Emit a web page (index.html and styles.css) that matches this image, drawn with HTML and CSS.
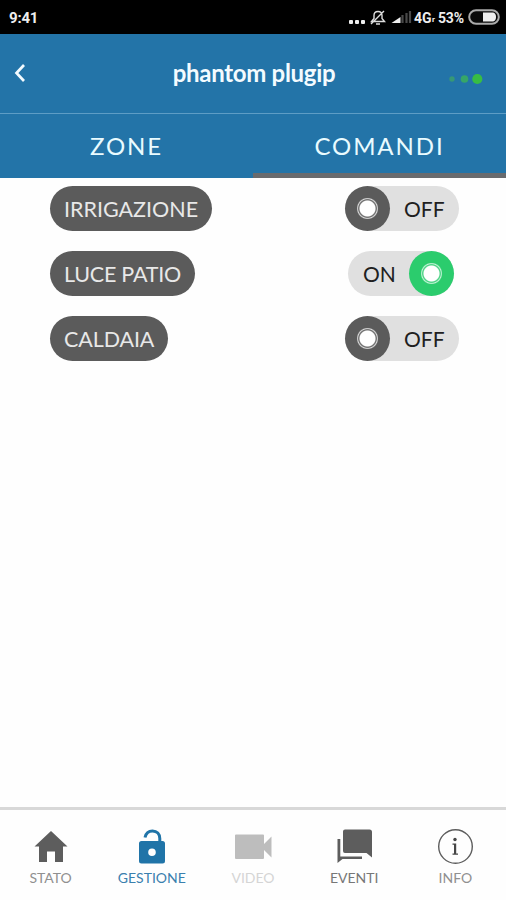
FILE: index.html
```html
<!DOCTYPE html>
<html lang="it">
<head>
<meta charset="utf-8">
<meta name="viewport" content="width=device-width">
<title>phantom plugip</title>
<link rel="stylesheet" href="styles.css">
</head>
<body>
<div class="app">
  <div class="status">
    <span class="time">9:41</span>
    <svg class="status-icons" width="64" height="34" viewBox="0 0 64 34">
      <g fill="#eee"><rect x="1" y="20" width="4" height="4" rx="1"/><rect x="7" y="20" width="4" height="4" rx="1"/><rect x="13" y="20" width="4" height="4" rx="1"/></g>
      <path d="M23.500 21.500h13l-2.500-3v-3c0-3-1.500-4-4-4s-4 1-4 4v3zM28 24h4M23 24l13-13" fill="none" stroke="#ddd" stroke-width="1.400"/>
      <path d="M43.500 23l9-6v6z" fill="#eee"/>
      <path d="M54.500 15v8M58.500 13v10M62 11v12" stroke="#494949" stroke-width="2.200"/>
    </svg>
    <span class="network">4G</span><span class="roam">r</span><span class="charge">53%</span>
    <svg class="battery" width="32" height="16" viewBox="0 0 32 16">
      <rect x="1.200" y="1.200" width="29.600" height="13.600" rx="6.800" fill="#090909" stroke="#aaa" stroke-width="2"/>
      <path d="M15 3.500h9c3 0 4 2 4 4.500s-1 4.500-4 4.500h-9z" fill="#eee"/>
    </svg>
  </div>
  <header class="header">
    <svg class="back" width="12" height="20" viewBox="0 0 12 20"><path d="M10 2L2.500 10l7.500 8" fill="none" stroke="#f3fbff" stroke-width="2.700"/></svg>
    <h1 class="title">phantom plugip</h1>
    <svg class="signal" width="36" height="12" viewBox="0 0 36 12"><circle cx="4" cy="6" r="2.700" fill="#369876"/><circle cx="16.500" cy="6" r="3.800" fill="#36a668"/><circle cx="29.300" cy="6" r="5.100" fill="#38bd43"/></svg>
  </header>
  <nav class="tabs">
    <span class="tab">ZONE</span>
    <span class="tab active">COMANDI</span>
  </nav>
  <main class="list">
    <div class="row"><span class="pill irrigation">IRRIGAZIONE</span><span class="toggle off"><i class="knob"></i><b>OFF</b></span></div>
    <div class="row"><span class="pill patio">LUCE PATIO</span><span class="toggle on"><b>ON</b><i class="knob"></i></span></div>
    <div class="row"><span class="pill boiler">CALDAIA</span><span class="toggle off"><i class="knob"></i><b>OFF</b></span></div>
  </main>
  <footer class="bottom">
    <div class="item"><svg width="38" height="38" viewBox="0 0 38 38"><path d="M19 3L2.500 18.500H7v15.500h8V23.500h8V34h8V18.500h4.500z" fill="#5d5d5d"/></svg><span>STATO</span></div>
    <div class="item current"><svg width="38" height="38" viewBox="0 0 38 38"><path d="M12 9.500C13 5 16 3 19.500 3c4.500 0 7.300 3 7.300 7.500V15" fill="none" stroke="#2074a8" stroke-width="3"/><path fill-rule="evenodd" d="M8.500 13h21a2.500 2.500 0 0 1 2.500 2.500v17.500a2.500 2.500 0 0 1-2.500 2.500h-21A2.500 2.500 0 0 1 6 33V15.500A2.500 2.500 0 0 1 8.500 13zM19 20.500a3.800 3.800 0 1 0 0 7.600 3.800 3.800 0 0 0 0-7.600z" fill="#2074a8"/></svg><span>GESTIONE</span></div>
    <div class="item muted"><svg width="38" height="38" viewBox="0 0 38 38"><path d="M2 6.500h27q1 0 1 1V16L37.500 8.500v21L30 22v8q0 1-1 1H2q-1 0-1-1V7.500q0-1 1-1z" fill="#bdbdbd"/></svg><span>VIDEO</span></div>
    <div class="item events"><svg width="38" height="38" viewBox="0 0 38 38"><path d="M10 1.500h24.500q2.500 0 2.500 2.500v25.500L31.500 25H10q-2 0-2-2V3.500q0-2 2-2zM2.500 11h2.800v17.500H27V31H7.500l-5 4z" fill="#5d5d5d"/></svg><span>EVENTI</span></div>
    <div class="item info"><svg width="38" height="38" viewBox="0 0 38 38"><circle cx="19.500" cy="18.500" r="16.800" fill="none" stroke="#5d5d5d" stroke-width="1.400"/><circle cx="19" cy="11.500" r="1.700" fill="#454545"/><path d="M16.500 15.500h3.700v9.900H22v1.300h-5.500v-1.300h1.500v-8.600h-1.500z" fill="#454545"/></svg><span>INFO</span></div>
  </footer>
</div>
</body>
</html>
```
FILE: styles.css
```css
* { box-sizing: border-box; }
body { margin: 0; background: #fefefe; font-family: Lato, sans-serif; }
.app { width: 506px; height: 900px; display: flex; flex-direction: column; background: #fefefe; overflow: hidden; }
.status { height: 34px; flex: none; background: #000; color: #eee; display: flex; align-items: center; padding: 0 6px 0 9px; font: 700 14px/34px Roboto, sans-serif; }
.time { font-size: 15px; letter-spacing: -.2px; padding-top: 2px; }
.status-icons { margin-left: auto; }
.network { margin-left: 2px; width: 18px; padding-top: 1px; }
.roam { font-size: 8px; padding-top: 6px; width: 6px; }
.charge { letter-spacing: -.2px; width: 30px; padding-top: 1px; }
.battery { flex: none; }
.header { height: 80px; flex: none; background: #2374a8; border-bottom: 1px solid #5e9dc5; display: grid; grid-template-columns: 60px 1fr 60px; align-items: center; color: #f3fbff; }
.back { margin: 0 0 1px 14px; }
.title { margin: 0 0 2px 2px; text-align: center; font-size: 24px; line-height: 28px; font-weight: 700; letter-spacing: -.3px; white-space: nowrap; }
.signal { margin: 11px 0 0 2px; }
.tabs { height: 64px; flex: none; display: grid; grid-template-columns: 1fr 1fr; background: #2374a8; color: #e9fbff; }
.tab { height: 64px; text-align: center; font-size: 24px; line-height: 63px; letter-spacing: 1.9px; }
.active { border-bottom: 5px solid #696b6e; }
.list { flex: 1; display: flex; flex-direction: column; gap: 20px; padding: 8px 47px 0 50px; }
.row { height: 45px; display: flex; justify-content: space-between; align-items: center; }
.pill { height: 45px; border-radius: 23px; background: #5b5b5b; color: #e8e8e8; padding-left: 14px; font-size: 21.5px; line-height: 46px; white-space: nowrap; }
.irrigation { width: 162px; }
.patio { width: 145px; letter-spacing: -.25px; }
.boiler { width: 118px; letter-spacing: -.1px; }
.toggle { height: 45px; border-radius: 23px; background: #e0e0e0; display: flex; align-items: center; color: #202020; font-size: 21px; line-height: 45px; }
.toggle b { font-weight: 400; }
.off { width: 114px; }
.off b { margin-left: 14px; }
.on { width: 106px; margin-right: 5px; justify-content: space-between; padding-left: 15px; }
.knob { width: 45px; height: 45px; border-radius: 50%; background: #5b5b5b; display: grid; place-items: center; }
.knob::before { content: ""; width: 23px; height: 23px; border-radius: 50%; background: radial-gradient(circle, #fff 0 7.500px, #777 8.500px, #777 9px, #ddd 9.800px, #5b5b5b 11px); }
.on .knob { background: #2bcc6d; }
.on .knob::before { background: radial-gradient(circle, #fff 0 7.500px, #55d58b 8.500px, #55d58b 9px, #c9f4da 9.800px, #2bcc6d 11px); }
.bottom { height: 93px; flex: none; border-top: 3px solid #d8d8d8; display: grid; grid-template-columns: repeat(5, 1fr); padding-top: 18px; }
.item { display: flex; flex-direction: column; align-items: center; color: #909090; font-size: 14px; }
.item svg { flex: none; }
.item span { margin-top: 3px; line-height: 18px; }
.current { color: #3a80ae; }
.muted { color: #d5d5d5; }
.events { color: #777; }
```
